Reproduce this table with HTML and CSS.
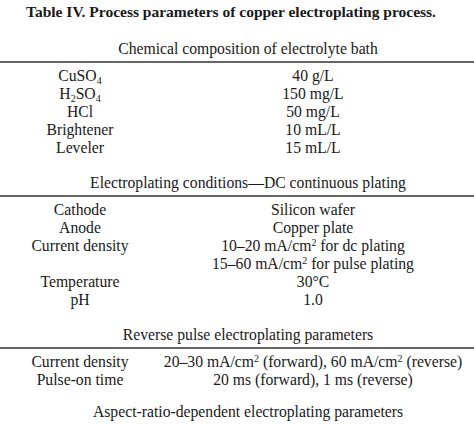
FILE: index.html
```html
<!DOCTYPE html>
<html>
<head>
<meta charset="utf-8">
<link rel="stylesheet" href="styles.css">
</head>
<body>
<div class="page">
  <div class="title">Table IV. Process parameters of copper electroplating process.</div>

  <div class="section first">
    <div class="head">Chemical composition of electrolyte bath</div>
    <div class="rule"></div>
    <div class="rows">
      <div class="k">CuSO<sub>4</sub></div><div class="v">40 g/L</div>
      <div class="k">H<sub>2</sub>SO<sub>4</sub></div><div class="v">150 mg/L</div>
      <div class="k">HCl</div><div class="v">50 mg/L</div>
      <div class="k">Brightener</div><div class="v">10 mL/L</div>
      <div class="k">Leveler</div><div class="v">15 mL/L</div>
    </div>
  </div>

  <div class="section">
    <div class="head">Electroplating conditions—DC continuous plating</div>
    <div class="rule"></div>
    <div class="rows">
      <div class="k">Cathode</div><div class="v">Silicon wafer</div>
      <div class="k">Anode</div><div class="v">Copper plate</div>
      <div class="k">Current density</div><div class="v">10–20 mA/cm<sup>2</sup> for dc plating</div>
      <div class="k"></div><div class="v">15–60 mA/cm<sup>2</sup> for pulse plating</div>
      <div class="k">Temperature</div><div class="v">30°C</div>
      <div class="k">pH</div><div class="v">1.0</div>
    </div>
  </div>

  <div class="section">
    <div class="head">Reverse pulse electroplating parameters</div>
    <div class="rule"></div>
    <div class="rows">
      <div class="k">Current density</div><div class="v">20–30 mA/cm<sup>2</sup> (forward), 60 mA/cm<sup>2</sup> (reverse)</div>
      <div class="k">Pulse-on time</div><div class="v">20 ms (forward), 1 ms (reverse)</div>
    </div>
  </div>

  <div class="section last">
    <div class="head">Aspect-ratio-dependent electroplating parameters</div>
  </div>
</div>
</body>
</html>
```

FILE: styles.css
```css
html, body {
  margin: 0;
  padding: 0;
  background: #ffffff;
}
body {
  width: 474px;
  height: 426px;
  overflow: hidden;
  font-family: "Liberation Serif", "Times New Roman", serif;
  font-size: 15.7px;
  color: #1a1a1a;
}
.page {
  width: 474px;
}
.title {
  width: 462px;
  text-align: center;
  font-weight: bold;
  font-size: 15.5px;
  line-height: 18px;
  margin-top: 3px;
  white-space: nowrap;
}
.section {
  margin-top: 17px;
}
.section.first {
  margin-top: 19px;
}
.section.last {
  margin-top: 14px;
}
.head {
  padding-left: 22px;
  text-align: center;
  line-height: 18px;
  white-space: nowrap;
}
.rule {
  height: 2px;
  background: #666666;
  margin-top: 3px;
}
.rows {
  display: grid;
  grid-template-columns: 160px 306px;
  grid-auto-rows: 18px;
  padding-top: 4px;
}
.k, .v {
  text-align: center;
  line-height: 18px;
  white-space: nowrap;
}
sub, sup {
  font-size: 10px;
  line-height: 0;
  position: relative;
  vertical-align: baseline;
}
sub {
  top: 3px;
}
sup {
  top: -5px;
}
```
